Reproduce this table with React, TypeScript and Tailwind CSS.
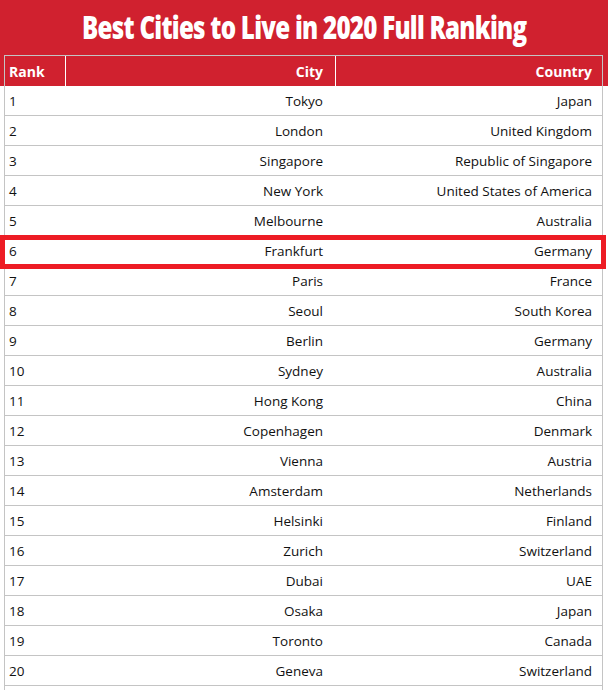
import React from 'react';

const ROWS: [number, string, string][] = [
  [1, 'Tokyo', 'Japan'],
  [2, 'London', 'United Kingdom'],
  [3, 'Singapore', 'Republic of Singapore'],
  [4, 'New York', 'United States of America'],
  [5, 'Melbourne', 'Australia'],
  [6, 'Frankfurt', 'Germany'],
  [7, 'Paris', 'France'],
  [8, 'Seoul', 'South Korea'],
  [9, 'Berlin', 'Germany'],
  [10, 'Sydney', 'Australia'],
  [11, 'Hong Kong', 'China'],
  [12, 'Copenhagen', 'Denmark'],
  [13, 'Vienna', 'Austria'],
  [14, 'Amsterdam', 'Netherlands'],
  [15, 'Helsinki', 'Finland'],
  [16, 'Zurich', 'Switzerland'],
  [17, 'Dubai', 'UAE'],
  [18, 'Osaka', 'Japan'],
  [19, 'Toronto', 'Canada'],
  [20, 'Geneva', 'Switzerland'],
];

const HIGHLIGHT = 6;

export default function App() {
  return (
    <div
      className="h-[690px] w-[608px] overflow-hidden bg-white text-[13.5px] text-[#111]"
      style={{ fontFamily: '"Open Sans", "Liberation Sans", sans-serif' }}
    >
      <div className="bg-[#d0212f]">
        <h1 className="flex h-[55px] items-center justify-center pb-[1px] text-[32px] font-extrabold tracking-[-1px] text-white">
          <span className="inline-block scale-x-[0.755] whitespace-nowrap">Best Cities to Live in 2020 Full Ranking</span>
        </h1>
        <div className="pl-[4px]">
          <div className="grid h-[31px] w-[599px] grid-cols-[61px_270px_1fr] border-x border-t border-[#c4c4c4] text-[14px] font-bold text-white">
            <div className="flex items-center border-r border-white pt-[1px] pl-[4px]">Rank</div>
            <div className="flex items-center justify-end border-r border-white pt-[1px] pr-[12px]">City</div>
            <div className="flex items-center justify-end pt-[1px] pr-[10px]">Country</div>
          </div>
        </div>
      </div>
      <div className="pl-[4px]">
        <div className="min-h-[610px] w-[599px] border-x border-[#c4c4c4]">
          {ROWS.map(([rank, city, country]) => (
            <div key={rank} className="relative grid h-[30px] grid-cols-[61px_270px_1fr] border-b border-[#c4c4c4]">
              <div className="flex items-center pt-[1px] pl-[4px]">{rank}</div>
              <div className="flex items-center justify-end pt-[1px] pr-[13px]">{city}</div>
              <div className="flex items-center justify-end pt-[1px] pr-[10px]">{country}</div>
              {rank === HIGHLIGHT && (
                <div className="absolute top-[-1px] left-[-5px] h-[34px] w-[606px] border-[5px] border-[#ed1c24]" />
              )}
            </div>
          ))}
        </div>
      </div>
    </div>
  );
}
